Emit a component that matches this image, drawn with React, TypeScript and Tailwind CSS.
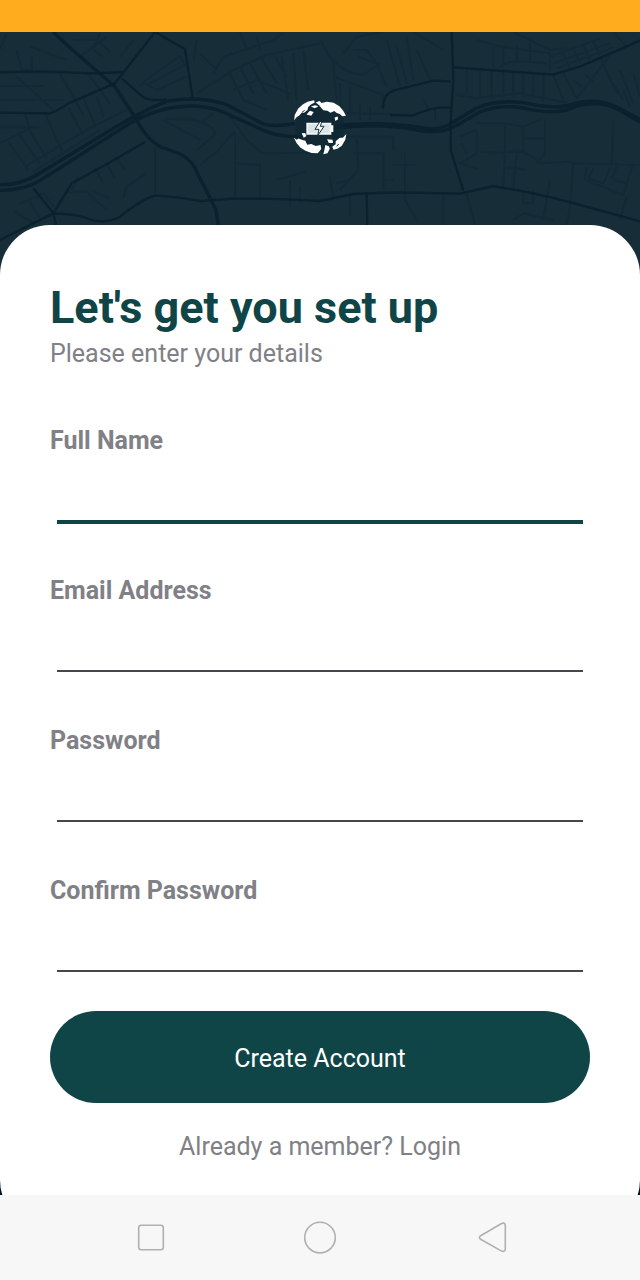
import React from "react";

const fields = [
  { id: "full-name", label: "Full Name", type: "text", active: true },
  { id: "email", label: "Email Address", type: "email", active: false },
  { id: "password", label: "Password", type: "password", active: false },
  { id: "confirm-password", label: "Confirm Password", type: "password", active: false },
];

const highways = [
  "M160 36 L215 88 L345 200 L410 300 Q450 375 500 387 L540 402 Q580 422 592 460 L622 518 L648 570 L656 620",
  "M0 494 Q60 496 115 462 L345 322 Q440 266 500 244 Q600 226 680 254 L790 312 Q830 322 885 310",
  "M0 511 Q72 512 120 482 L370 322 Q465 260 575 258 Q640 258 700 290 L800 335 Q845 352 900 350 L1010 324 Q1140 308 1250 330 Q1320 345 1370 316 L1440 276 Q1500 252 1570 264 Q1670 288 1725 260 Q1800 236 1860 272 L1920 306",
  "M1010 316 Q1140 304 1260 322 Q1320 335 1360 306 L1430 264 Q1490 238 1570 248 Q1670 272 1725 250 Q1800 232 1860 266 L1920 298",
];

const avenues = [
  "M0 157 L120 154 L280 160 L370 156",
  "M465 36 L345 190 L205 250 Q165 278 145 280 L0 278",
  "M365 175 L430 232 Q450 244 500 238",
  "M0 660 L80 620 L160 580 L215 490 L325 430 L435 366",
  "M160 580 Q240 582 270 599 Q320 612 360 590 Q430 535 465 527 Q530 530 600 543 L700 536 Q820 534 960 543 L1060 522 L1190 517 L1380 521 L1480 498 Q1600 518 1700 544 L1920 604",
  "M160 580 L100 505 M160 580 L168 616",
  "M1355 36 L1360 180 L1352 300 L1352 390 L1390 512",
  "M1360 142 L1660 164 L1740 140 L1920 62",
  "M1352 184 L1300 182 L1180 212 Q1150 222 1148 265",
  "M1100 516 L1102 616",
  "M465 36 L555 88 L578 232",
  "M1170 285 L1240 286 Q1310 256 1352 264",
];

const streets = [
  "M0 198 H130 M0 240 H190 M0 322 H118 M50 170 L160 270 M75 280 L90 330 M180 160 L250 285 M260 155 L330 250 M90 80 L200 120 M50 90 L65 150 L95 150 V110 M20 40 L0 88",
  "M0 370 L100 320 M25 365 L85 450 M55 340 L120 430 M85 325 L140 415 M135 280 L185 392 M75 440 L260 330 L380 270 M100 455 L300 330 M205 265 L250 345 M250 235 L288 320 M290 230 L310 290",
  "M420 200 Q420 190 540 108 L555 135 L450 190 M435 190 L470 210 L560 170 M400 60 L360 110 M300 40 L280 90 L310 110 M220 60 L290 60 L330 95 M240 110 L320 50",
  "M500 296 L580 300 Q645 315 645 345 L590 390 M490 300 L600 360 M600 435 L650 395 L705 335 M640 280 L600 310 M690 290 L740 360 L785 398 L960 400 M705 335 L705 540 M705 430 L780 435 V540",
  "M465 385 V520 M440 460 L380 500 L370 535 M280 515 L330 535 M200 515 L260 515 L320 570 M320 430 L345 475 M350 415 L375 450 M285 445 L310 490 M235 470 L215 510 M60 550 L130 520 L160 560 M45 575 L100 610 M90 545 L120 595 M830 480 L915 455 M870 480 V560 M900 500 V550",
  "M590 220 L700 150 L800 105 L960 70 M640 160 L670 110 L730 90 L820 60 L850 40 M720 36 L740 90 M770 50 L780 90 M590 60 L580 120 M600 100 L650 150 M690 160 L730 240 M720 140 L760 220 M750 130 L800 220 M785 115 L830 190 M820 100 L860 170 M845 110 L865 240 M880 100 L890 240 M910 95 L925 210 M700 210 L770 180 L870 220 M730 240 L800 270",
  "M960 60 L1000 130 L1010 240 M1030 100 L1070 50 L1150 36 M1075 110 L1130 130 L1100 90 L1060 90 M990 110 Q1030 160 1090 165 L1140 130 M1130 130 L1160 200 M1160 60 L1200 200 M1190 80 L1220 190 M1220 50 L1240 180 M1240 36 L1330 90 M1250 90 L1290 180 M1000 170 L1150 225 L1148 240 M1020 190 V270 M1050 200 V275 M1080 250 V300 M1110 260 V300 M1040 280 L1170 282 M1270 240 L1285 265 M1305 270 V300",
  "M1400 150 V222 M1440 150 V235 M1475 150 V235 M1510 150 V230 M1540 155 V230 M1570 155 V230 M1600 160 V235 M1630 160 V245 M1660 165 L1690 240 M1690 160 L1730 235 M1370 225 L1430 235 L1560 220 L1700 248 M1480 80 V140 M1510 75 V135 M1550 75 V125 M1590 70 V125 M1430 60 L1500 80 L1650 100 L1650 150 M1500 140 Q1520 120 1590 125 L1640 130 M1540 36 L1650 90 L1700 85",
  "M1650 110 L1800 55 M1660 130 L1830 70 M1670 145 L1840 82 M1690 100 L1710 145 M1720 85 L1740 130 M1750 75 L1770 120 M1780 65 L1800 105 M1840 36 L1880 80 M1830 105 L1730 235 M1720 180 L1745 200 M1755 165 L1780 185 M1800 110 L1850 220 M1840 190 L1870 240 M1870 210 L1890 260 M1900 160 L1920 230 M1860 150 L1900 250",
  "M1430 310 L1515 310 V398 L1440 396 M1515 310 L1570 320 V395 H1515 M1570 320 L1630 295 M1575 355 H1635 V400 L1610 430 M1635 300 V390 M1570 395 L1625 430 L1710 425 L1720 430 L1920 435 M1515 398 L1510 500 M1550 400 L1540 510 M1510 440 L1580 450 M1840 300 L1835 430 M1380 350 L1430 330 V400 L1380 430 L1430 445 M1400 400 L1385 370",
  "M1000 350 L1180 350 V390 M1070 355 L1075 450 L1020 510 M1060 400 H1150 V510 M1150 480 H1180 M1215 400 V540 L1250 600 M1180 435 H1250 M990 470 L1000 540 M1010 490 L1050 480 M1050 530 V590 M1330 520 V616 M1400 520 L1425 616 M1570 510 V550 H1600 V510 M1650 480 L1630 600 M1720 430 L1710 560 L1700 616 M1540 600 L1570 580 L1660 600",
  "M1760 440 L1755 480 L1870 525 L1900 430 M1780 445 L1765 475 L1810 490 L1830 445 M1840 480 L1880 490 M1850 440 L1835 475 M1880 530 L1860 600",
];

function MapBackdrop() {
  return (
    <svg
      aria-hidden="true"
      viewBox="0 36 1920 744"
      preserveAspectRatio="xMidYMin slice"
      className="absolute inset-x-0 top-0 h-[248px] w-full"
      fill="none"
      strokeLinejoin="round"
    >
      <rect x="0" y="36" width="1920" height="744" fill="#172e39" />
      <g stroke="#0e2833" strokeWidth="6" opacity="0.6">
        {streets.map((d) => (
          <path key={d} d={d} />
        ))}
      </g>
      <g stroke="#08202c" strokeWidth="7" opacity="0.85">
        {avenues.map((d) => (
          <path key={d} d={d} />
        ))}
      </g>
      <g stroke="#08202c" strokeWidth="10" opacity="0.85">
        {highways.map((d) => (
          <path key={d} d={d} />
        ))}
      </g>
    </svg>
  );
}

function GlobeBatteryLogo() {
  return (
    <svg role="img" aria-label="Globe battery logo" viewBox="36 30 168 168" className="relative size-14">
      <circle cx="120" cy="113" r="74" fill="#0b2733" opacity="0.6" />
      <g fill="#ffffff" transform="translate(-4 -6) scale(1.03)">
        <path d="M45 94 L47 78 L57 60 L70 48 L84 40 L103 36 L105 42 L94 48 L86 55 L84 64 L74 72 L67 72 L60 80 L52 85 Z" />
        <path d="M91 66 L102 70 L95 81 L81 77 Z" />
        <path d="M94 54 L106 50 L116 53 L105 59 Z" />
        <path d="M108 42 L119 38 L125 44 L140 40 L160 43 L177 53 L188 66 L196 81 L185 82 L178 76 L169 73 L162 67 L151 72 L142 66 L130 65 L124 58 L118 50 Z" />
        <path d="M163 86 L172 83 L173 91 L165 96 Z" />
        <path d="M67 132 L77 131 L81 140 L73 145 Z" />
        <path d="M44 144 L52 151 L58 147 L67 151 L78 154 L83 165 L95 163 L108 169 L122 166 L124 178 L114 190 L96 189 L78 183 L63 173 L52 160 Z" />
        <path d="M141 149 L157 151 L158 160 L146 160 Z" />
        <path d="M197 134 L194 151 L184 168 L172 176 L160 180 L156 171 L166 164 L166 155 L178 145 L187 145 Z" />
        <path d="M136 166 L146 170 L149 177 L142 190 L130 193 L133 181 Z" />
      </g>
      <path d="M66 67 L74 61 M170 169 L176 162" stroke="#173440" strokeWidth="3" />
      <path d="M79 98 H154 V106 H160 V126 H154 V134 H79 Z" fill="#f2f6f7" />
      <path d="M84 103 H149 V129 H84 Z" fill="#dbe4e6" />
      <path d="M119 96 L105 118 H117 L113 137 L132 109 H121 L125 96" fill="#f7fafa" stroke="#173440" strokeWidth="3" />
    </svg>
  );
}

export default function App() {
  return (
    <div className="flex min-h-screen flex-col bg-[#02141f] font-['Roboto',sans-serif]">
      <div className="h-8 bg-[#ffac1f]" />
      <main className="relative flex-1 overflow-hidden">
        <MapBackdrop />
        <header className="flex h-[192px] items-center justify-center">
          <GlobeBatteryLogo />
        </header>
        <section className="relative mt-px -mb-9 rounded-[50px] bg-white px-[50px] pt-[55px] pb-[68px] text-[25px] leading-[30px] text-[#808086]">
          <h1 className="text-[45px] leading-[56px] font-bold text-[#104547]">Let's get you set up</h1>
          <p className="mt-[3px]">Please enter your details</p>
          <form onSubmit={(event) => event.preventDefault()}>
            <div className="mt-[57px] flex flex-col gap-[54px]">
              {fields.map(({ id, label, type, active }) => (
                <div key={id} className="flex h-24 flex-col">
                  <label htmlFor={id} className="font-bold">
                    {label}
                  </label>
                  <input
                    id={id}
                    name={id}
                    type={type}
                    className={
                      active
                        ? "mx-[7px] h-[68px] shrink-0 border-b-4 border-[#104547] text-[#104547] outline-none"
                        : "mx-[7px] h-[66px] shrink-0 border-b-2 border-[#46464e] text-[#104547] outline-none"
                    }
                  />
                </div>
              ))}
            </div>
            <button
              type="submit"
              className="mt-[39px] h-[92px] w-full rounded-full bg-[#104547] pt-1 text-white"
            >
              Create Account
            </button>
          </form>
          <p className="mt-[29px] text-center">
            Already a member? <a href="#login">Login</a>
          </p>
        </section>
      </main>
      <nav aria-label="System navigation" className="flex h-[85px] items-center justify-around bg-[#f7f7f7] px-16">
        <button type="button" aria-label="Recent apps">
          <svg viewBox="0 0 36 36" className="size-9" fill="none" stroke="#b0b0b0" strokeWidth="1.6">
            <rect x="7.7" y="5.2" width="24.6" height="24.6" rx="2.5" />
          </svg>
        </button>
        <button type="button" aria-label="Home">
          <svg viewBox="0 0 36 36" className="size-9" fill="none" stroke="#b0b0b0" strokeWidth="1.6">
            <circle cx="18" cy="17.6" r="15.3" />
          </svg>
        </button>
        <button type="button" aria-label="Back">
          <svg viewBox="0 0 36 36" className="size-9" fill="none" stroke="#b0b0b0" strokeWidth="1.6">
            <path d="M7.6 15.7 L28.6 3.5 Q31.9 2.1 32.3 5.4 V28.9 Q31.9 32.3 28.6 31.1 L7.6 19.3 Q5.3 17.5 7.6 15.7 Z" />
          </svg>
        </button>
      </nav>
    </div>
  );
}
